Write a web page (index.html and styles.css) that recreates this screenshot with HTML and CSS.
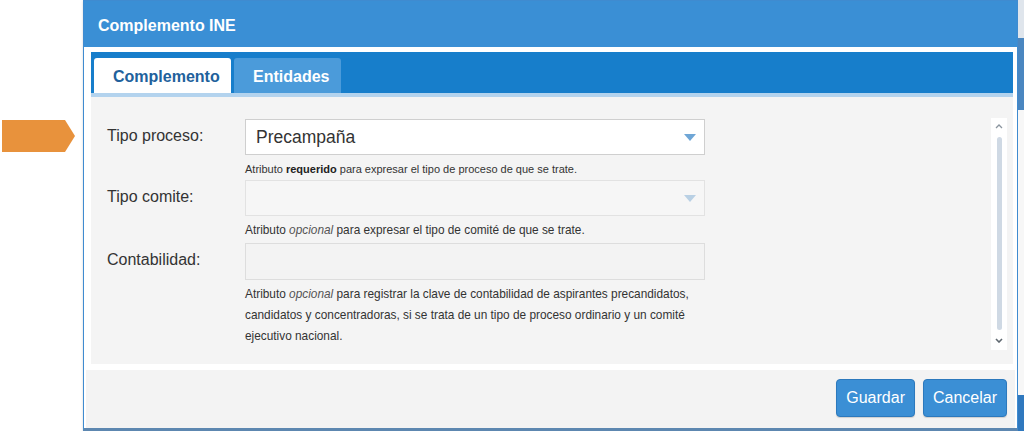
FILE: index.html
```html
<!DOCTYPE html>
<html lang="es">
<head>
<meta charset="utf-8">
<title>Complemento INE</title>
<link rel="stylesheet" href="styles.css">
</head>
<body>
<div class="page">
  <div class="gutter">
    <svg class="pointer" width="74" height="32" viewBox="0 0 74 32"><polygon points="0,0 63,0 73,16 63,32 0,32" fill="#e8923c"/></svg>
  </div>
  <div class="dialog">
    <div class="titlebar">Complemento INE</div>
    <div class="dialog-body">
      <div class="tabstrip">
        <div class="tab tab-active">Complemento</div>
        <div class="tab">Entidades</div>
      </div>
      <div class="panel">
        <div class="form">
          <label class="label">Tipo proceso:</label>
          <div class="field select">
            <span>Precampaña</span>
            <svg class="caret" width="12" height="7" viewBox="0 0 12 7"><polygon points="0,0 12,0 6,7" fill="#6fa6d6"/></svg>
          </div>
          <div></div>
          <p class="help help-short">Atributo <b>requerido</b> para expresar el tipo de proceso de que se trate.</p>

          <label class="label">Tipo comite:</label>
          <div class="field select disabled">
            <span></span>
            <svg class="caret" width="12" height="7" viewBox="0 0 12 7"><polygon points="0,0 12,0 6,7" fill="#b9d0e4"/></svg>
          </div>
          <div></div>
          <p class="help">Atributo <i>opcional</i> para expresar el tipo de comité de que se trate.</p>

          <label class="label">Contabilidad:</label>
          <div class="field input"></div>
          <div></div>
          <p class="help">Atributo <i>opcional</i> para registrar la clave de contabilidad de aspirantes precandidatos,<br>candidatos y concentradoras, si se trata de un tipo de proceso ordinario y un comité<br>ejecutivo nacional.</p>
        </div>
        <div class="scrollbar">
          <svg width="8" height="5" viewBox="0 0 8 5"><polyline points="1,4 4,1 7,4" fill="none" stroke="#8a949e" stroke-width="1.3"/></svg>
          <div class="thumb"></div>
          <svg width="8" height="5" viewBox="0 0 8 5"><polyline points="1,1 4,4 7,1" fill="none" stroke="#5f6870" stroke-width="1.6"/></svg>
        </div>
      </div>
    </div>
    <div class="footer">
      <button class="btn">Guardar</button>
      <button class="btn">Cancelar</button>
    </div>
  </div>
  <div class="backdrop"></div>
</div>
</body>
</html>
```

FILE: styles.css
```css
* { box-sizing: border-box; }
html, body { margin: 0; padding: 0; }
body {
  background: #ffffff;
  font-family: "Liberation Sans", Arial, sans-serif;
  color: #333333;
  width: 1024px;
  height: 431px;
  overflow: hidden;
}
.page {
  display: flex;
  height: 431px;
}
.gutter {
  width: 83px;
  flex: none;
  padding-top: 120px;
  padding-left: 2px;
}
.pointer { display: block; }

.dialog {
  width: 935px;
  flex: none;
  height: 431px;
  background: #ffffff;
  border: 1px solid #3f8bd0;
  border-bottom: 3px solid #5d87b0;
  box-shadow: 1px 1px 3px rgba(0,0,0,0.35);
  display: flex;
  flex-direction: column;
}
.titlebar {
  height: 46px;
  background: #3a8fd5;
  color: #ffffff;
  font-weight: bold;
  font-size: 16px;
  padding-left: 14px;
  line-height: 49px;
  flex: none;
}
.dialog-body {
  padding: 5px 4px 0 7px;
}
.tabstrip {
  height: 45px;
  background: #177ecb;
  border-bottom: 4px solid #b3d3ee;
  padding: 6px 0 0 3px;
  display: flex;
  gap: 3px;
}
.tab {
  height: 35px;
  padding: 0 19px;
  background: #4b9bda;
  color: #ffffff;
  font-weight: bold;
  font-size: 16px;
  line-height: 37px;
  border-radius: 3px 3px 0 0;
  width: 107px;
}
.tab-active {
  background: #ffffff;
  color: #21619c;
  width: 137px;
}
.panel {
  height: 267px;
  background: #f4f4f4;
  display: flex;
  padding: 22px 6px 0 16px;
}
.form {
  display: grid;
  grid-template-columns: 138px 460px;
  align-content: start;
}
.label {
  font-size: 16px;
  color: #333333;
  align-self: center;
  padding-bottom: 2px;
}
.field {
  border: 1px solid #cfcfcf;
  background: #ffffff;
}
.select {
  height: 36px;
  display: flex;
  align-items: center;
  justify-content: space-between;
  padding: 0 8px 0 10px;
  font-size: 17.5px;
  color: #333333;
}
.disabled {
  background: #f6f6f6;
  border-color: #e2e2e2;
}
.input {
  height: 37px;
  background: #f3f3f3;
  border-color: #dddddd;
  margin-top: 2px;
}
.help {
  margin: 4px 0 0 0;
  font-size: 11.85px;
  line-height: 21px;
  color: #333333;
  white-space: nowrap;
}
.help-short { font-size: 11px; }
.help b { font-weight: bold; color: #222222; }
.help i { color: #555555; }

.scrollbar {
  margin-left: auto;
  margin-top: -1px;
  width: 16px;
  height: 232px;
  background: #ffffff;
  display: flex;
  flex-direction: column;
  align-items: center;
  padding: 6px 0 7px;
  gap: 8px;
}
.scrollbar svg { display: block; flex: none; }
.thumb {
  width: 5px;
  flex: 1;
  background: #cfd9e4;
  border-radius: 3px;
}

.footer {
  margin: 6px 2px 0 2px;
  flex: 1;
  background: #f3f3f3;
  display: flex;
  justify-content: flex-end;
  align-items: flex-start;
  gap: 8px;
  padding: 9px 8px 0 0;
}
.btn {
  height: 38px;
  border: 1px solid #2c79bd;
  background: #3b8fd5;
  color: #ffffff;
  font-family: "Liberation Sans", Arial, sans-serif;
  font-size: 16px;
  border-radius: 4px;
  padding: 0 9px;
  box-shadow: 0 1px 1px rgba(0,0,0,0.15);
}

.backdrop {
  flex: 1;
  background: linear-gradient(to bottom,
    #dfe5ec 0, #dfe5ec 38px,
    #4a86c0 38px, #4a86c0 110px,
    #f7f7f7 110px, #f7f7f7 395px,
    #2f78be 395px, #2f78be 431px);
}
```
